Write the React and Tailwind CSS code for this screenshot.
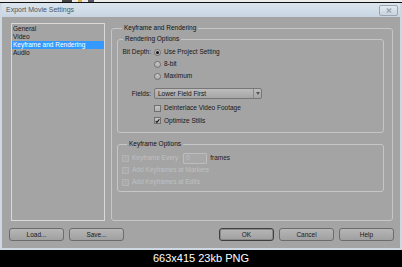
import React from "react";

const Radio = ({ checked }) => (
  <span className="w-[7px] h-[7px] rounded-full border border-[#707070] bg-gradient-to-b from-[#cacaca] to-[#acacac] flex items-center justify-center shrink-0">
    {checked && <span className="w-[3px] h-[3px] rounded-full bg-[#111]" />}
  </span>
);

const Check = ({ checked, disabled }) => (
  <span
    className={`w-[7px] h-[7px] border flex items-center justify-center shrink-0 ${
      disabled
        ? "border-[#b4b4b4] bg-[#aaaaaa]"
        : "border-[#707070] bg-gradient-to-b from-[#c4c4c4] to-[#aeaeae]"
    }`}
  >
    {checked && (
      <svg width="6" height="6" viewBox="0 0 6 6">
        <path d="M0.8 3 L2.3 4.6 L5.3 0.9" fill="none" stroke="#111" strokeWidth="1.3" />
      </svg>
    )}
  </span>
);

const Button = ({ children, isDefault }) => (
  <button
    className={`w-[55px] h-[13px] rounded-[3px] bg-gradient-to-b from-[#b6b6b6] to-[#a0a0a0] text-[6.5px] text-[#1a1a1a] flex items-center justify-center ${
      isDefault ? "border border-[#3f3f3f] shadow-[inset_0_0_0_1px_#8a8a8a]" : "border border-[#6c6c6c]"
    }`}
  >
    {children}
  </button>
);

const Group = ({ title, className = "", children }) => (
  <fieldset className={`border border-[#c6c6c6] rounded-[3px] ${className}`}>
    <legend className="ml-[5px] px-[2px] leading-[8px] text-[#111]">{title}</legend>
    {children}
  </fieldset>
);

const sections = ["General", "Video", "Keyframe and Rendering", "Audio"];

export default function App() {
  return (
    <div className="w-[402px] h-[267px] bg-black flex flex-col font-['Liberation_Sans',Arial,sans-serif] text-[6.5px] text-[#161616] overflow-hidden">
      {/* bit of the desktop behind the dialog */}
      <div className="h-[2px] bg-[#ececec] flex gap-[6px] pl-[62px]">
        <span className="w-[10px] h-[2px] bg-[#444]" />
        <span className="w-[4px] h-[2px] bg-[#d8b040]" />
        <span className="w-[6px] h-[2px] bg-[#556]" />
      </div>
      <div className="h-[1px] bg-[#111]" />

      <div className="bg-[#cdd8e2] px-[2px] pb-[2px] flex flex-col">
        {/* title bar */}
        <div className="h-[14px] bg-gradient-to-b from-[#dbe5ee] to-[#c8d5e1] flex items-center justify-between pl-[4px] pr-[2px]">
          <span className="text-[7px] text-[#4a5662]">Export Movie Settings</span>
          <span className="w-[19px] h-[11px] rounded-[2px] border border-[#9aa5b0] bg-gradient-to-b from-[#e2e9f0] to-[#c9d3dd] flex items-center justify-center">
            <svg width="6" height="5" viewBox="0 0 6 5">
              <path d="M0.8 0.6 L5.2 4.4 M5.2 0.6 L0.8 4.4" stroke="#98a2ac" strokeWidth="1.3" />
            </svg>
          </span>
        </div>

        {/* dialog body */}
        <div className="h-[231px] bg-[#a4a4a4] flex flex-col">
          <div className="h-[198px] mt-[6px] pl-[9px] pr-[7px] flex gap-[6px]">
            <div className="w-[94px] h-full border border-[#d9d9d9] pt-[1px] flex flex-col">
              {sections.map((s) => (
                <div
                  key={s}
                  className={`h-[8px] leading-[8px] pl-[1px] ${
                    s === "Keyframe and Rendering" ? "bg-[#3399ff] text-white" : ""
                  }`}
                >
                  {s}
                </div>
              ))}
            </div>

            <Group title="Keyframe and Rendering" className="flex-1 mt-[1px] h-[197px] pl-[5px] pr-[8px] pt-[3px]">
              <Group title="Rendering Options" className="pt-[3px] pb-[5px]">
                <div className="grid grid-cols-[33px_1fr] gap-x-[3px]">
                  <span className="h-[12px] flex items-center justify-end">Bit Depth:</span>
                  <span className="h-[12px] flex items-center gap-[3px]">
                    <Radio checked /> Use Project Setting
                  </span>
                  <span />
                  <span className="h-[12px] flex items-center gap-[3px]">
                    <Radio /> 8-bit
                  </span>
                  <span />
                  <span className="h-[12px] flex items-center gap-[3px]">
                    <Radio /> Maximum
                  </span>

                  <span className="h-[11px] mt-[6px] flex items-center justify-end">Fields:</span>
                  <div className="h-[11px] mt-[6px] w-[108px] rounded-[2px] border border-[#777] bg-gradient-to-b from-[#bcbcbc] to-[#a6a6a6] flex items-center">
                    <span className="flex-1 pl-[3px]">Lower Field First</span>
                    <span className="w-[8px] h-full border-l border-[#8a8a8a] flex items-center justify-center">
                      <svg width="4" height="3" viewBox="0 0 4 3">
                        <path d="M0 0 L4 0 L2 3 Z" fill="#555" />
                      </svg>
                    </span>
                  </div>

                  <span />
                  <span className="h-[12px] mt-[3px] flex items-center gap-[3px]">
                    <Check /> Deinterlace Video Footage
                  </span>
                  <span />
                  <span className="h-[13px] flex items-center gap-[3px]">
                    <Check checked /> Optimize Stills
                  </span>
                </div>
              </Group>

              <Group title="Keyframe Options" className="mt-[7px] pt-[4px] pb-[3px] pl-[4px]">
                <div className="h-[12px] flex items-center">
                  <Check disabled />
                  <span className="ml-[3px] text-[#c0c0c0]">Keyframe Every</span>
                  <span className="ml-[5px] w-[24px] h-[11px] border border-[#bdbdbd] rounded-[1px] bg-[#a8a8a8] pl-[2px] flex items-center text-[#c0c0c0]">
                    0
                  </span>
                  <span className="ml-[3px] text-[#222]">frames</span>
                </div>
                <div className="h-[12px] flex items-center gap-[3px] text-[#c0c0c0]">
                  <Check disabled /> Add Keyframes at Markers
                </div>
                <div className="h-[12px] flex items-center gap-[3px] text-[#c0c0c0]">
                  <Check disabled /> Add Keyframes at Edits
                </div>
              </Group>
            </Group>
          </div>

          <div className="mt-[7px] pl-[7px] pr-[6px] flex justify-between">
            <div className="flex gap-[5px]">
              <Button>Load...</Button>
              <Button>Save...</Button>
            </div>
            <div className="flex gap-[5px]">
              <Button isDefault>OK</Button>
              <Button>Cancel</Button>
              <Button>Help</Button>
            </div>
          </div>
        </div>
      </div>

      <div className="flex-1 flex items-center justify-center text-white text-[11px]">
        663x415 23kb PNG
      </div>
    </div>
  );
}
